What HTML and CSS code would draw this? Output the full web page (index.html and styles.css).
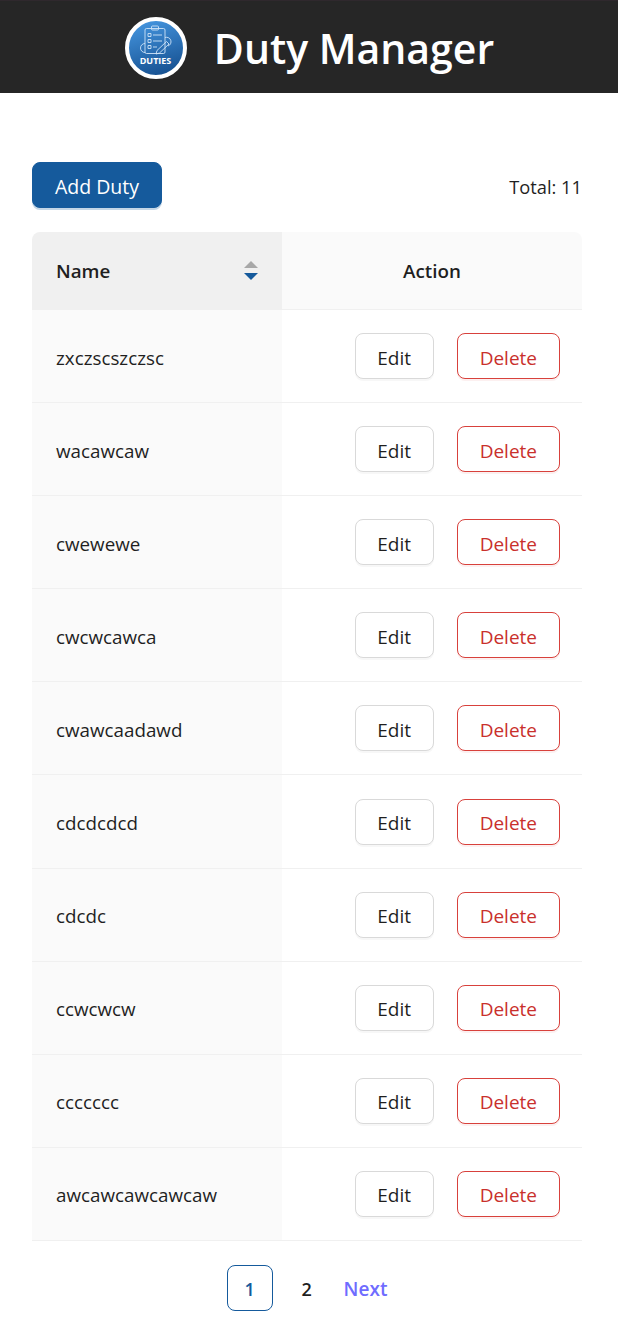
FILE: index.html
```html
<!DOCTYPE html>
<html lang="en">
<head>
    <meta charset="UTF-8">
    <meta name="viewport" content="width=device-width, initial-scale=1.0">
    <title>Duty Manager</title>
    <link rel="stylesheet" href="styles.css">
</head>
<body>
    <header class="topbar">
        <svg class="logo" viewBox="0 0 62 62" width="62" height="62">
            <defs>
                <linearGradient id="logoFill" x1="0.3" y1="0" x2="0.6" y2="1">
                    <stop offset="0" stop-color="#4596e0"/>
                    <stop offset="1" stop-color="#154f8f"/>
                </linearGradient>
            </defs>
            <circle cx="31" cy="31" r="29" fill="url(#logoFill)" stroke="#fff" stroke-width="4"/>
            <g fill="none" stroke="#cfe3f7" stroke-width="0.900">
                <rect x="20" y="11.500" width="20" height="25" rx="1.500"/>
                <rect x="26.500" y="9" width="7" height="4" rx="1"/>
                <path d="M23 16.500h3v3h-3zM23 22.500h3v3h-3zM23 28.500h3v3h-3z"/>
                <path d="M28 18h9M28 24h9M28 30h4"/>
                <path d="M20 26.500a4.500 4.500 0 0 0 0 9M40 20.500a4.500 4.500 0 0 1 3 8.500"/>
                <path d="M31 37l1-3.500 9.500-9 2.500 2.500-9.500 9z"/>
            </g>
            <text class="logo-text" x="30.500" y="47" text-anchor="middle">DUTIES</text>
        </svg>
        <h1>Duty Manager</h1>
    </header>

    <main class="content">
        <div class="toolbar">
            <button class="btn btn-primary">Add Duty</button>
            <span class="total">Total: 11</span>
        </div>

        <table class="duties">
            <thead>
                <tr>
                    <th class="col-name">
                        <div class="name-head">
                            <span>Name</span>
                            <span class="sorter">
                                <span class="arrow-up"></span>
                                <span class="arrow-down"></span>
                            </span>
                        </div>
                    </th>
                    <th class="col-action">Action</th>
                </tr>
            </thead>
            <tbody>
                <tr><td class="col-name">zxczscszczsc</td><td><div class="actions"><button class="btn btn-edit">Edit</button><button class="btn btn-danger">Delete</button></div></td></tr>
                <tr><td class="col-name">wacawcaw</td><td><div class="actions"><button class="btn btn-edit">Edit</button><button class="btn btn-danger">Delete</button></div></td></tr>
                <tr><td class="col-name">cwewewe</td><td><div class="actions"><button class="btn btn-edit">Edit</button><button class="btn btn-danger">Delete</button></div></td></tr>
                <tr><td class="col-name">cwcwcawca</td><td><div class="actions"><button class="btn btn-edit">Edit</button><button class="btn btn-danger">Delete</button></div></td></tr>
                <tr><td class="col-name">cwawcaadawd</td><td><div class="actions"><button class="btn btn-edit">Edit</button><button class="btn btn-danger">Delete</button></div></td></tr>
                <tr><td class="col-name">cdcdcdcd</td><td><div class="actions"><button class="btn btn-edit">Edit</button><button class="btn btn-danger">Delete</button></div></td></tr>
                <tr><td class="col-name">cdcdc</td><td><div class="actions"><button class="btn btn-edit">Edit</button><button class="btn btn-danger">Delete</button></div></td></tr>
                <tr><td class="col-name">ccwcwcw</td><td><div class="actions"><button class="btn btn-edit">Edit</button><button class="btn btn-danger">Delete</button></div></td></tr>
                <tr><td class="col-name">ccccccc</td><td><div class="actions"><button class="btn btn-edit">Edit</button><button class="btn btn-danger">Delete</button></div></td></tr>
                <tr><td class="col-name">awcawcawcawcaw</td><td><div class="actions"><button class="btn btn-edit">Edit</button><button class="btn btn-danger">Delete</button></div></td></tr>
            </tbody>
        </table>

        <nav class="pager">
            <span class="page page-active">1</span>
            <span class="page">2</span>
            <span class="page-next">Next</span>
        </nav>
    </main>
</body>
</html>
```

FILE: styles.css
```css
* {
    box-sizing: border-box;
}
body {
    font-family: "Open Sans", "Noto Sans", Arial, sans-serif;
    margin: 0;
    padding: 0;
    background-color: #fff;
    color: #1f1f1f;
}
.topbar {
    height: 93px;
    padding-top: 3px;
    background-color: #262626;
    border-top: 1px solid #2f282d;
    display: flex;
    align-items: center;
    justify-content: center;
    gap: 27px;
}
.topbar h1 {
    margin: 0;
    color: #fff;
    font-size: 41px;
    font-weight: 600;
    line-height: 1;
}
.logo {
    display: block;
    margin: -2px 0 0 1px;
}
.logo-text {
    font-size: 9px;
    font-weight: 700;
    fill: #fff;
}
.content {
    padding: 69px 36px 0 32px;
}
.toolbar {
    display: flex;
    justify-content: space-between;
    align-items: center;
    margin-bottom: 24px;
}
.total {
    font-size: 18.300px;
    padding-top: 3px;
}
.btn {
    font-family: inherit;
    font-size: 19px;
    height: 46px;
    padding: 3px 22px 0;
    border: 1px solid #d9d9d9;
    border-radius: 8px;
    background-color: #fff;
    color: #1f1f1f;
    box-shadow: 0 2px 0 rgba(0, 0, 0, 0.03);
    cursor: pointer;
}
.btn-primary {
    width: 130px;
    padding: 2px 0 0;
    font-size: 19.500px;
    background-color: #155a9c;
    border-color: #155a9c;
    color: #fff;
    box-shadow: 0 2px 0 rgba(21, 90, 156, 0.25);
}
.btn-danger {
    color: #c9302c;
    border-color: #d8413c;
    box-shadow: 0 2px 0 rgba(216, 65, 60, 0.08);
}
.btn-edit {
    width: 79px;
    padding: 3px 0 0;
}
.duties {
    width: 550px;
    border-collapse: separate;
    border-spacing: 0;
    table-layout: fixed;
    font-size: 18.800px;
}
.duties th {
    height: 78px;
    padding: 0 24px;
    font-weight: 600;
    background-color: #fafafa;
    border-bottom: 1px solid #f0f0f0;
}
.duties th.col-name {
    width: 250px;
    background-color: #f0f0f0;
    border-top-left-radius: 8px;
    text-align: left;
}
.duties th.col-action {
    border-top-right-radius: 8px;
    text-align: center;
}
.duties td {
    height: 93.100px;
    padding: 0 22px 0 24px;
    border-bottom: 1px solid #f0f0f0;
}
.duties td.col-name {
    padding-top: 3px;
    background-color: #fafafa;
}
.name-head {
    display: flex;
    justify-content: space-between;
    align-items: center;
}
.sorter {
    display: flex;
    flex-direction: column;
    gap: 5px;
}
.arrow-up {
    width: 0;
    height: 0;
    border-left: 7px solid transparent;
    border-right: 7px solid transparent;
    border-bottom: 7px solid #a8a8a8;
}
.arrow-down {
    width: 0;
    height: 0;
    border-left: 7px solid transparent;
    border-right: 7px solid transparent;
    border-top: 7px solid #155a9c;
}
.actions {
    display: flex;
    justify-content: flex-end;
    gap: 23px;
}
.pager {
    display: flex;
    justify-content: center;
    align-items: center;
    gap: 11px;
    margin-top: 24px;
    font-size: 18px;
    font-weight: 600;
}
.page {
    width: 46px;
    height: 46px;
    padding-top: 2px;
    display: flex;
    align-items: center;
    justify-content: center;
}
.page-active {
    border: 1px solid #155a9c;
    border-radius: 8px;
    color: #155a9c;
}
.page-next {
    margin-left: 3px;
    padding-top: 2px;
    color: #6f6cff;
    font-size: 19px;
}
```
